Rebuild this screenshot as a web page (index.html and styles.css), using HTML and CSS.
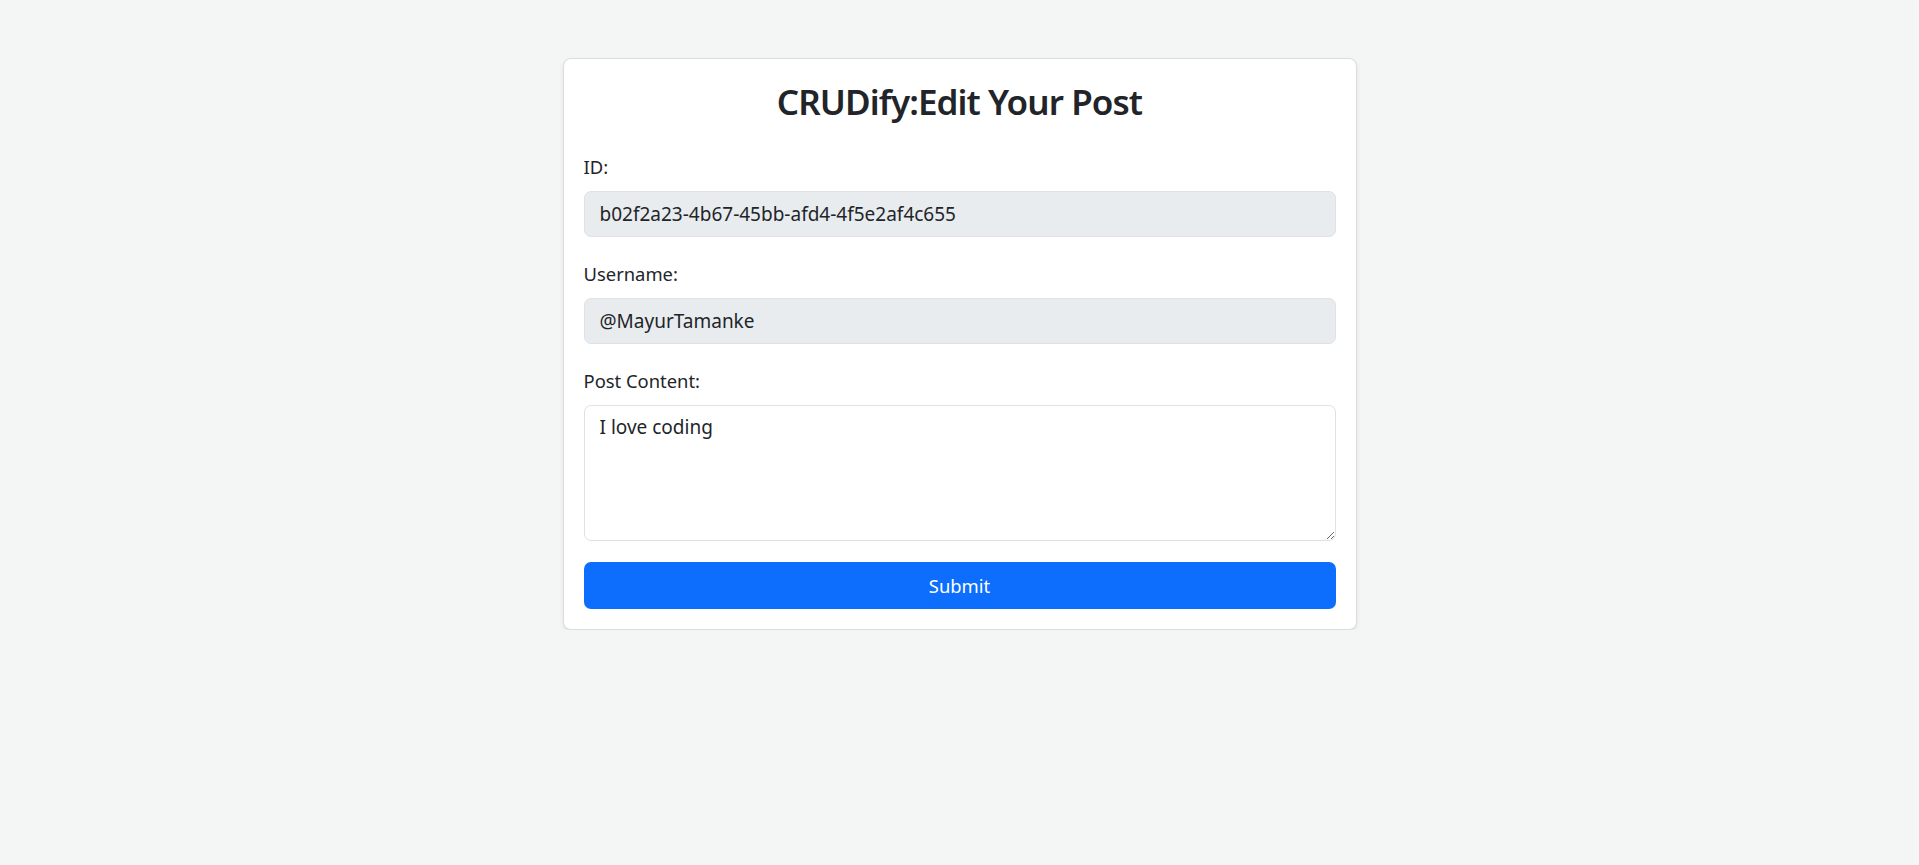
FILE: index.html
```html
<!DOCTYPE html>
<html lang="en">
<head>
<meta charset="utf-8">
<title>CRUDify: Edit Your Post</title>
<link rel="stylesheet" href="styles.css">
</head>
<body>
<main class="page">
  <form class="card">
    <h2 class="title">CRUDify:Edit Your Post</h2>
    <div class="field">
      <label class="label" for="id">ID:</label>
      <input class="control" id="id" type="text" value="b02f2a23-4b67-45bb-afd4-4f5e2af4c655" disabled>
    </div>
    <div class="field">
      <label class="label" for="username">Username:</label>
      <input class="control" id="username" type="text" value="@MayurTamanke" disabled>
    </div>
    <div class="field last">
      <label class="label" for="content">Post Content:</label>
      <textarea class="control area" id="content">I love coding</textarea>
    </div>
    <button class="submit" type="submit">Submit</button>
  </form>
</main>
</body>
</html>
```
FILE: styles.css
```css
html, body {
  margin: 0;
  padding: 0;
}
body {
  background: #f4f5f5;
  color: #212529;
  font-family: "Noto Sans", "Open Sans", sans-serif;
  font-size: 19.2px;
  line-height: 1.5;
}
.page {
  display: flex;
  justify-content: center;
  padding-top: 58px;
}
.card {
  box-sizing: border-box;
  width: 794px;
  background: #fff;
  border: 1px solid #dadcde;
  border-radius: 8px;
  box-shadow: 0 2px 4px rgba(0, 0, 0, 0.08);
  padding: 20px;
  display: flex;
  flex-direction: column;
}
.title {
  margin: 0 0 29px;
  text-align: center;
  font-size: 35px;
  font-weight: 600;
  letter-spacing: -0.9px;
  line-height: 45px;
}
.field {
  display: flex;
  flex-direction: column;
  margin-bottom: 22.6px;
}
.field.last {
  margin-bottom: 21px;
}
.label {
  display: block;
  margin-bottom: 9.6px;
  font-size: 18.4px;
  line-height: 28.8px;
}
.control {
  box-sizing: border-box;
  width: 100%;
  height: 46px;
  padding: 0 15px;
  font: inherit;
  font-size: 19px;
  color: #212529;
  background: #fff;
  border: 1px solid #dee2e6;
  border-radius: 7px;
  outline: none;
}
.control:disabled {
  background: #e9ecef;
  opacity: 1;
  -webkit-text-fill-color: #212529;
}
.area {
  height: 136px;
  padding: 7px 15px;
  resize: vertical;
  display: block;
}
.submit {
  height: 47px;
  width: 100%;
  border: 0;
  border-radius: 7px;
  background: #0d6efd;
  color: #fff;
  font: inherit;
  font-size: 18.4px;
  cursor: pointer;
}
```
